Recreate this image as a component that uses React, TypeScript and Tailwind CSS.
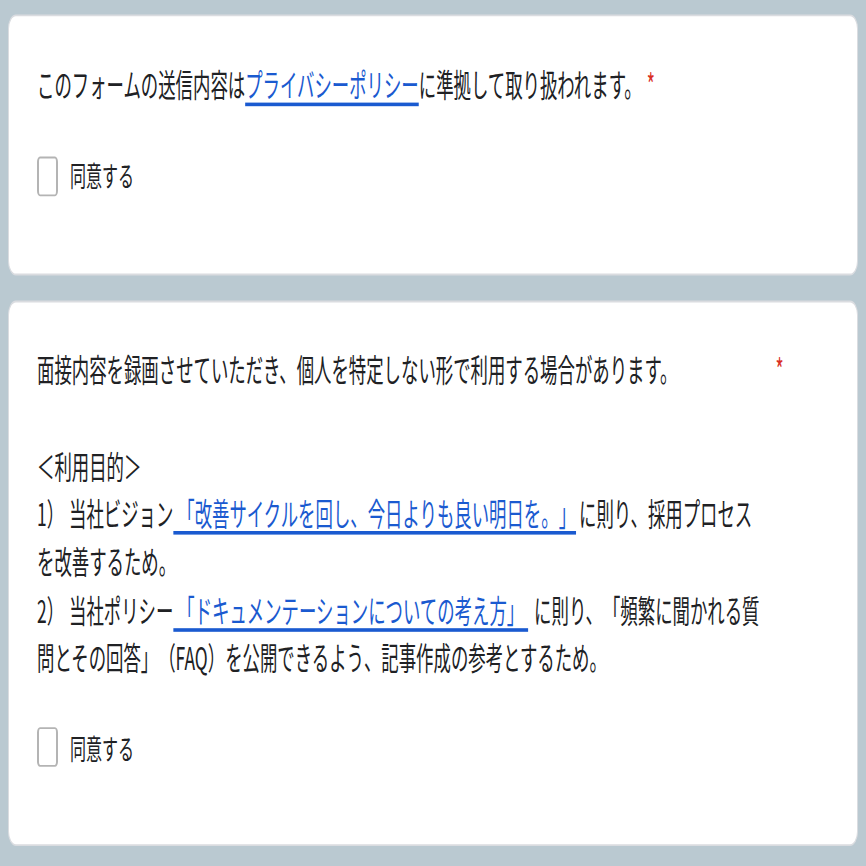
import React from 'react';

const Checkbox = ({ label, className }: { label: string; className: string }) => (
  <label className={`flex items-center gap-3 ${className}`}>
    <span className="h-[22px] w-[21px] rounded-[3px] border-x-2 border-y-[1.5px] border-[#b4b4b4] bg-white" />
    <span className="text-[16px] leading-[26.67px] text-[#202124]">{label}</span>
  </label>
);

const Link = ({ children }: { children: React.ReactNode }) => (
  <a className="text-[#1a5ad0] underline decoration-[1.5px] underline-offset-[3px]">{children}</a>
);

export default function App() {
  return (
    <div className="h-screen overflow-hidden bg-[#bac9d1]">
      <div className="origin-top scale-y-[1.8] px-2 pt-2 font-['Noto_Sans_CJK_JP',sans-serif] text-[17.4px] leading-[26.67px] text-[#202124] [text-spacing-trim:space-all]">
        <div className="flex flex-col gap-[14px]">
          <section className="rounded-lg border border-[#dadce0] bg-white pl-7 pr-6 pt-[24.5px] pb-[41px]">
            <div>
              このフォームの送信内容は<Link>プライバシーポリシー</Link>に準拠して取り扱われます。
              <span className="ml-[5px] text-[#d93025]">*</span>
            </div>
            <Checkbox label="同意する" className="mt-6" />
          </section>

          <section className="rounded-lg border border-[#dadce0] bg-white pl-7 pr-6 pt-[24.5px] pb-[40px]">
            <div className="flex">
              <span>面接内容を録画させていただき、個人を特定しない形で利用する場合があります。</span>
              <span className="ml-[98px] text-[#d93025]">*</span>
            </div>
            <div className="whitespace-nowrap">
              <br />
              ＜利用目的＞
              <br />
              <span className="inline-block w-[32px]">1）</span>当社ビジョン
              <Link> 「改善サイクルを回し、今日よりも良い明日を。」</Link>
              <span className="ml-[3px]">に則り、採用プロセス</span>
              <br />
              を改善するため。
              <br />
              <span className="inline-block w-[32px]">2）</span>当社ポリシー
              <Link> 「ドキュメンテーションについての考え方」 </Link>
              <span className="ml-[6px]">に則り、「頻繁に聞かれる質</span>
              <br />
              問とその回答」（FAQ）を公開できるよう、記事作成の参考とするため。
            </div>
            <Checkbox label="同意する" className="mt-[23px]" />
          </section>
        </div>
      </div>
    </div>
  );
}
